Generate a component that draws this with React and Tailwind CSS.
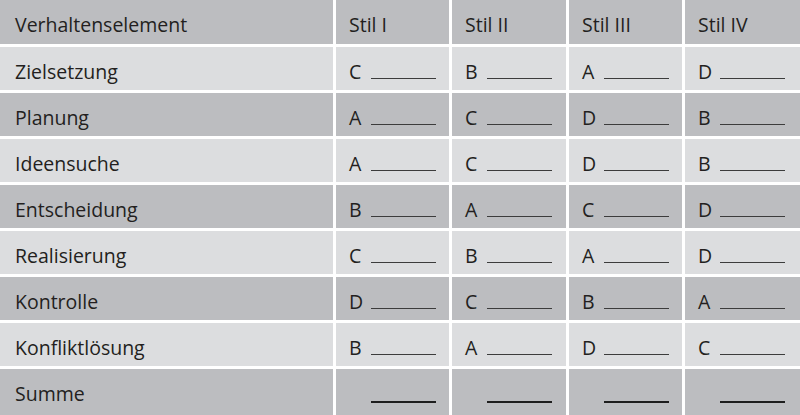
import React from "react";

const headers = ["Stil I", "Stil II", "Stil III", "Stil IV"];

const rows = [
    { label: "Zielsetzung", letters: ["C", "B", "A", "D"] },
    { label: "Planung", letters: ["A", "C", "D", "B"] },
    { label: "Ideensuche", letters: ["A", "C", "D", "B"] },
    { label: "Entscheidung", letters: ["B", "A", "C", "D"] },
    { label: "Realisierung", letters: ["C", "B", "A", "D"] },
    { label: "Kontrolle", letters: ["D", "C", "B", "A"] },
    { label: "Konfliktlösung", letters: ["B", "A", "D", "C"] }
];

const Cell = ({ dark, className = "", children }) => (
    <div
        className={
            (dark ? "bg-[#bcbdc0] " : "bg-[#dcdddf] ") +
            "pt-[12px] leading-[26px] whitespace-nowrap " +
            className
        }
    >
        {children}
    </div>
);

const App = () => {
    return (
        <div
            className="w-[800px] h-[415px] bg-white text-[#231f20] text-[19.5px] overflow-hidden"
            style={{ fontFamily: "'Open Sans', 'Liberation Sans', sans-serif" }}
        >
            <div className="grid grid-cols-[333px_113px_114px_113px_115px] grid-rows-[44px_repeat(7,43px)_46px] gap-[3px]">
                <Cell dark className="pl-[15px]">Verhaltenselement</Cell>
                {headers.map(h => (
                    <Cell dark key={h} className="pl-[13px]">
                        {h}
                    </Cell>
                ))}

                {rows.map((row, i) => (
                    <React.Fragment key={row.label}>
                        <Cell dark={i % 2 === 1} className="pl-[15px]">
                            {row.label}
                        </Cell>
                        {row.letters.map((l, j) => (
                            <Cell dark={i % 2 === 1} key={j} className="pl-[13px]">
                                <span className="inline-block w-[22px]">{l}</span>
                                <span className="inline-block w-[65px] border-b border-[#3c3c3c]"></span>
                            </Cell>
                        ))}
                    </React.Fragment>
                ))}

                <Cell dark className="pl-[15px]">Summe</Cell>
                {headers.map(h => (
                    <Cell dark key={h} className="pl-[35px]">
                        <span className="inline-block w-[65px] border-b-2 border-[#1e1e1e] translate-y-[2px]"></span>
                    </Cell>
                ))}
            </div>
        </div>
    );
};

export default App;
